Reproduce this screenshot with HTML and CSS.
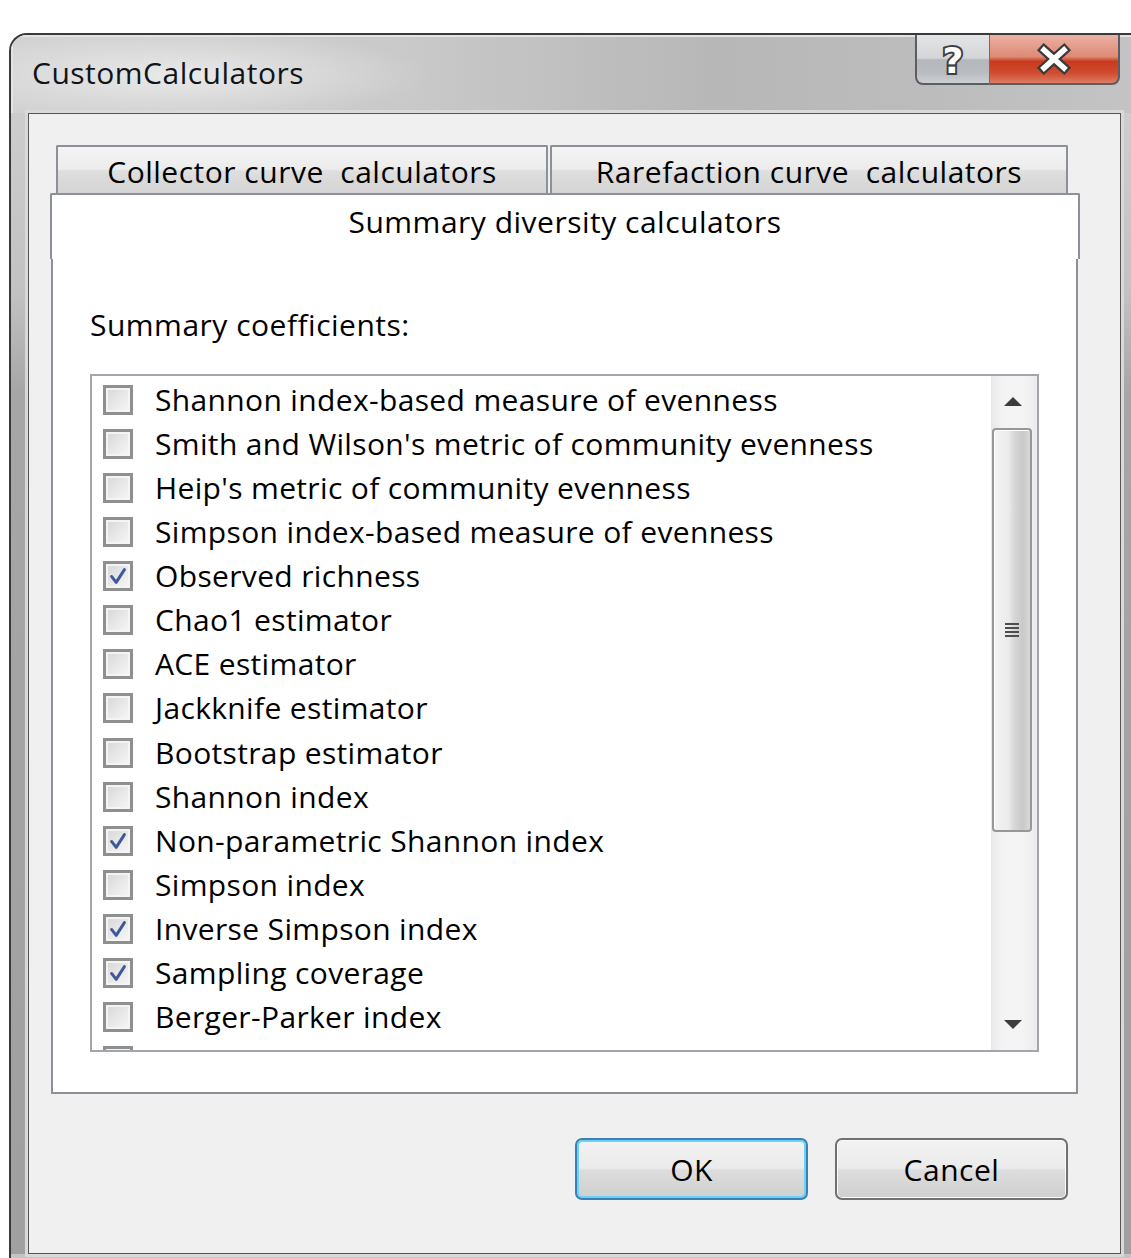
FILE: index.html
```html
<!DOCTYPE html>
<html lang="en">
<head>
<meta charset="utf-8">
<title>CustomCalculators</title>
<link rel="stylesheet" href="styles.css">
</head>
<body>
<div class="window">
  <div class="titlebar">
    <span class="title">CustomCalculators</span>
    <div class="caption-btns">
      <div class="cap help">
        <svg width="40" height="44" viewBox="0 0 40 44" aria-hidden="true">
          <text x="20" y="36" text-anchor="middle" class="cap-glyph">?</text>
        </svg>
      </div>
      <div class="cap close">
        <svg width="40" height="34" viewBox="0 0 40 34" aria-hidden="true">
          <path d="M10 8 L30 26 M30 8 L10 26" stroke="#3a3a3a" stroke-width="10" stroke-linecap="square"/>
          <path d="M10 8 L30 26 M30 8 L10 26" stroke="#ffffff" stroke-width="5.5" stroke-linecap="square"/>
        </svg>
      </div>
    </div>
  </div>
  <div class="frame-body">
    <div class="client">
      <div class="tabctl">
        <div class="tab-row back">
          <div class="tab tab-collector">Collector curve&nbsp; calculators</div>
          <div class="tab tab-rarefaction">Rarefaction curve&nbsp; calculators</div>
        </div>
        <div class="tab selected">Summary diversity calculators</div>
        <div class="panel">
          <div class="label">Summary coefficients:</div>
          <div class="listbox">
            <ul class="items">
              <li class="item"><span class="check"></span>Shannon index-based measure of evenness</li>
              <li class="item"><span class="check"></span>Smith and Wilson's metric of community evenness</li>
              <li class="item"><span class="check"></span>Heip's metric of community evenness</li>
              <li class="item"><span class="check"></span>Simpson index-based measure of evenness</li>
              <li class="item"><span class="check on"><svg viewBox="0 0 24 24"><path d="M5 12.5 L10 19 L19 5"/></svg></span>Observed richness</li>
              <li class="item"><span class="check"></span>Chao1 estimator</li>
              <li class="item"><span class="check"></span>ACE estimator</li>
              <li class="item"><span class="check"></span>Jackknife estimator</li>
              <li class="item"><span class="check"></span>Bootstrap estimator</li>
              <li class="item"><span class="check"></span>Shannon index</li>
              <li class="item"><span class="check on"><svg viewBox="0 0 24 24"><path d="M5 12.5 L10 19 L19 5"/></svg></span>Non-parametric Shannon index</li>
              <li class="item"><span class="check"></span>Simpson index</li>
              <li class="item"><span class="check on"><svg viewBox="0 0 24 24"><path d="M5 12.5 L10 19 L19 5"/></svg></span>Inverse Simpson index</li>
              <li class="item"><span class="check on"><svg viewBox="0 0 24 24"><path d="M5 12.5 L10 19 L19 5"/></svg></span>Sampling coverage</li>
              <li class="item"><span class="check"></span>Berger-Parker index</li>
              <li class="item"><span class="check"></span></li>
            </ul>
            <div class="scrollbar">
              <div class="sb-btn">
                <svg width="18" height="10" viewBox="0 0 18 10"><path d="M0 10 L9 1 L18 10 Z" fill="#3c3c3c"/></svg>
              </div>
              <div class="sb-track">
                <div class="sb-thumb">
                  <svg width="14" height="16" viewBox="0 0 14 16" class="grip">
                    <path d="M0 2 H14 M0 6 H14 M0 10 H14 M0 14 H14" stroke="#4e4e4e" stroke-width="1.8"/>
                  </svg>
                </div>
              </div>
              <div class="sb-btn">
                <svg width="18" height="10" viewBox="0 0 18 10"><path d="M0 0 L9 9 L18 0 Z" fill="#3c3c3c"/></svg>
              </div>
            </div>
          </div>
        </div>
      </div>
      <div class="buttons">
        <button class="btn default">OK</button>
        <button class="btn">Cancel</button>
      </div>
    </div>
  </div>
</div>
</body>
</html>
```

FILE: styles.css
```css
html, body {
  margin: 0;
  padding: 0;
  overflow: hidden;
  background: #ffffff;
}

body {
  width: 1131px;
  height: 1258px;
  font-family: "Open Sans", "Noto Sans", sans-serif;
  font-size: 30px;
  letter-spacing: 0.5px;
  color: #000;
}

*, *::before, *::after {
  box-sizing: border-box;
}

/* Window frame */
.window {
  margin: 33px 0 0 9px;
  width: 1140px;
  height: 1240px;
  border-top: 2px solid #3a3a3a;
  border-left: 2px solid #3a3a3a;
  border-top-left-radius: 18px;
  background: #c4c4c4;
  overflow: hidden;
}

.titlebar {
  height: 78px;
  display: flex;
  align-items: flex-start;
  padding-left: 21px;
  background:
    radial-gradient(ellipse 250px 46px at 170px 40px, rgba(255,255,255,0.55), rgba(255,255,255,0) 100%),
    linear-gradient(to right, #d2d2d2 0, #c9c9c9 35%, #b7b7b7 62%, #bcbcbc 80%, #c4c4c4 100%);
  box-shadow: inset 2px 2px 0 #e3e3e3;
}

.title {
  margin-top: 18px;
  font-size: 30px;
  line-height: 40px;
  color: #101418;
}

.caption-btns {
  margin-left: auto;
  margin-right: 29px;
  display: flex;
}

.cap {
  height: 50px;
  display: flex;
  align-items: center;
  justify-content: center;
  border: 2px solid #5b5d61;
  border-top: none;
}

.help {
  width: 75px;
  border-right: 1px solid #6a6c70;
  border-bottom-left-radius: 8px;
  background: linear-gradient(to bottom, #e4e5e7 0, #d3d5d8 48%, #b3b6ba 52%, #b9bcc0 80%, #cdd0d3 100%);
}

.close {
  width: 130px;
  border-left: none;
  border-bottom-right-radius: 8px;
  background: linear-gradient(to bottom, #ebb1a4 0, #de8a75 45%, #c83a1e 55%, #cf4a2e 78%, #dd7d62 100%);
}

.cap-glyph {
  font-family: "DejaVu Sans", sans-serif;
  font-weight: bold;
  font-size: 36px;
  letter-spacing: 0;
  fill: #ffffff;
  stroke: #3d3f44;
  stroke-width: 4px;
  paint-order: stroke;
}

.frame-body {
  padding-left: 17px;
  background: linear-gradient(to bottom, #cdcdcd 0, #c2c2c2 180px, #a6a6a6 280px, #a0a0a0 100%);
}

.client {
  width: 1093px;
  height: 1141px;
  border: 1px solid #555555;
  background: #f0f0f0;
  box-shadow: 0 0 0 3px #d9d9d9;
  padding: 31px 0 0 21px;
}

/* Tab control */
.tabctl {
  width: 1030px;
}

.tab-row.back {
  display: flex;
  gap: 2px;
  padding-left: 6px;
  height: 48px;
}

.tab {
  height: 48px;
  border: 2px solid #8c9098;
  border-bottom: none;
  border-radius: 2px 2px 0 0;
  text-align: center;
  padding-top: 4px;
  line-height: 42px;
  white-space: nowrap;
  background: linear-gradient(to bottom, #f4f4f4 0, #ececec 48%, #dedede 52%, #d4d4d4 100%);
}

.tab-collector { width: 492px; }
.tab-rarefaction { width: 518px; }

.tab.selected {
  width: 1030px;
  height: 66px;
  padding-top: 5px;
  line-height: 44px;
  background: #ffffff;
}

.panel {
  margin-left: 1px;
  width: 1027px;
  height: 835px;
  border: 2px solid #8c9098;
  border-top: none;
  background: #ffffff;
  padding: 46px 0 0 37px;
}

.label {
  height: 40px;
  line-height: 40px;
}

/* Checked list box */
.listbox {
  margin-top: 29px;
  width: 949px;
  height: 678px;
  border: 2px solid #a2a5ab;
  background: #ffffff;
  display: flex;
  overflow: hidden;
}

.items {
  flex: 1;
  list-style: none;
  margin: 0;
  padding: 2px 0 0 11px;
  overflow: hidden;
  letter-spacing: 0.35px;
}

.item {
  height: 44.07px;
  display: flex;
  align-items: center;
  gap: 22px;
  white-space: nowrap;
  line-height: 44px;
}

.check {
  flex: none;
  width: 30px;
  height: 30px;
  border: 3px solid #8e8f8f;
  box-shadow: inset 0 0 0 2px #f4f4f4;
  background: linear-gradient(135deg, #d6d6d6 0, #e6e6e6 45%, #f7f7f7 100%);
  display: flex;
  align-items: center;
  justify-content: center;
}

.check svg {
  width: 22px;
  height: 22px;
}

.check svg path {
  fill: none;
  stroke: #3e5898;
  stroke-width: 3.2;
  stroke-linecap: round;
  stroke-linejoin: round;
}

.scrollbar {
  flex: none;
  width: 46px;
  display: flex;
  flex-direction: column;
  background: linear-gradient(to right, #e9e9e9 0, #f3f3f3 25%, #f4f4f4 70%, #ebebeb 100%);
}

.sb-btn {
  height: 50px;
  display: flex;
  align-items: center;
  justify-content: center;
  padding-right: 3px;
}

.sb-track {
  flex: 1;
  padding-top: 2px;
}

.sb-thumb {
  height: 404px;
  margin: 0 5px 0 1px;
  border: 2px solid #979797;
  border-radius: 4px;
  background: linear-gradient(to right, #f3f3f3 0, #ececec 40%, #d8d8d8 55%, #c9c9c9 80%, #d9d9d9 100%);
  box-shadow: inset 1px 1px 0 #ffffff;
  display: flex;
  align-items: center;
  justify-content: center;
}

/* Dialog buttons */
.buttons {
  margin-top: 44px;
  display: flex;
  justify-content: flex-end;
  gap: 27px;
  padding-right: 52px;
}

.btn {
  width: 233px;
  height: 62px;
  border: 2px solid #707070;
  border-radius: 7px;
  font-family: inherit;
  font-size: 30px;
  letter-spacing: 0.5px;
  color: #000;
  padding: 0;
  background: linear-gradient(to bottom, #f2f2f2 0, #ebebeb 48%, #dddddd 52%, #cfcfcf 100%);
  box-shadow: inset 0 0 0 1px #fbfbfb;
}

.btn.default {
  border-color: #3c7fb1;
  box-shadow: inset 0 0 0 2px #66d3f7;
}
```
